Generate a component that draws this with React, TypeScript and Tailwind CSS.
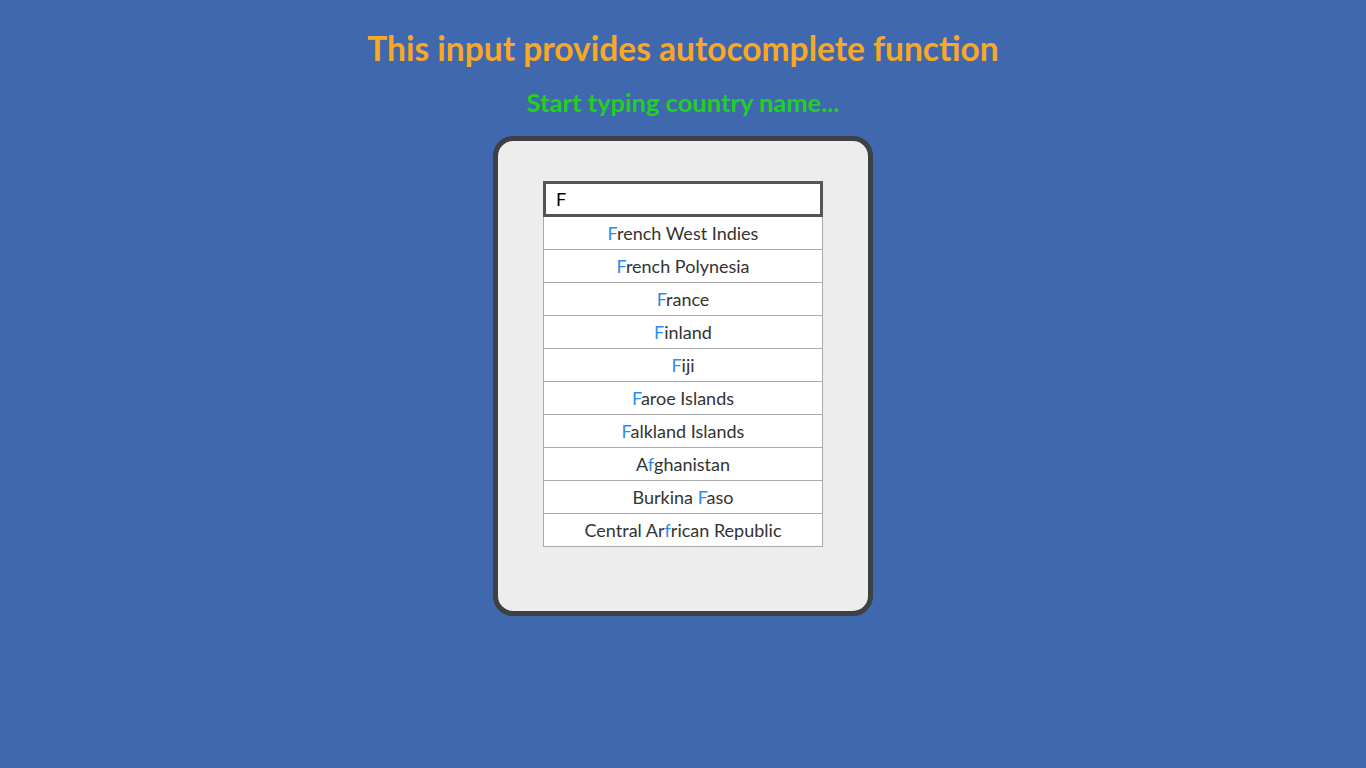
const countries: { name: string; hi: number }[] = [
  { name: 'French West Indies', hi: 0 },
  { name: 'French Polynesia', hi: 0 },
  { name: 'France', hi: 0 },
  { name: 'Finland', hi: 0 },
  { name: 'Fiji', hi: 0 },
  { name: 'Faroe Islands', hi: 0 },
  { name: 'Falkland Islands', hi: 0 },
  { name: 'Afghanistan', hi: 1 },
  { name: 'Burkina Faso', hi: 8 },
  { name: 'Central Arfrican Republic', hi: 10 },
]

export default function App() {
  return (
    <div
      className="min-h-screen bg-[#4068ae] flex flex-col items-center"
      style={{ fontFamily: '"Lato", "Open Sans", sans-serif' }}
    >
      <h1 className="mt-[28px] text-[33.5px] leading-[40px] font-bold text-[#f9a825]">
        This input provides autocomplete function
      </h1>
      <h2 className="mt-[19px] text-[25.5px] leading-[30px] font-bold text-[#22d022]">
        Start typing country name...
      </h2>
      <div className="mt-[19px] w-[380px] h-[480px] rounded-[20px] border-[5px] border-[#3d4144] bg-[#ededed] pt-[40px] flex flex-col items-center">
        <div className="w-[280px]">
          <input
            defaultValue="F"
            className="block w-full h-[36px] border-[3px] border-[#555555] bg-white px-[10px] text-[18px] text-black outline-none"
          />
          {countries.map((c) => (
            <div
              key={c.name}
              className="h-[33px] border border-t-0 border-[#aaaaaa] bg-white flex items-center justify-center text-[18px] text-[#333333]"
            >
              <span>
                {c.name.slice(0, c.hi)}
                <span className="text-[#2a8cf0]">{c.name[c.hi]}</span>
                {c.name.slice(c.hi + 1)}
              </span>
            </div>
          ))}
        </div>
      </div>
    </div>
  )
}
